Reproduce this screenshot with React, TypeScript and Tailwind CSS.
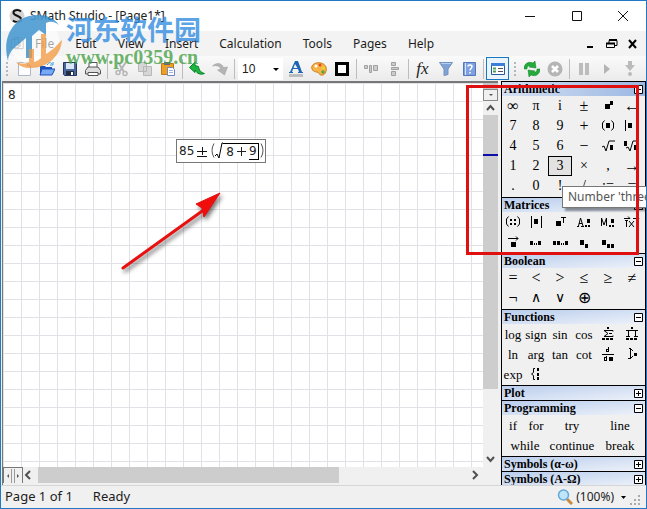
import React from "react";

const menus = ["File", "Edit", "View", "Insert", "Calculation", "Tools", "Pages", "Help"];

type IconProps = { children: React.ReactNode; size?: number };

const Icon = ({ children, size = 16 }: IconProps) => (
  <svg width={size} height={size} viewBox="0 0 16 16" fill="none" aria-hidden="true">
    {children}
  </svg>
);

// small drawings used inside the palette cells, on a 24x20 field
const Glyph = ({ blocks = [], path = "" }: { blocks?: number[][]; path?: string }) => (
  <svg width="24" height="20" viewBox="0 0 24 20" className="shrink-0" aria-hidden="true">
    {blocks.map((b, i) => (
      <rect key={i} x={b[0]} y={b[1]} width={b[2]} height={b[3]} fill="#000" />
    ))}
    <path d={path} stroke="#000" fill="none" />
  </svg>
);

const parens = "M8.500 4.500l-2 2.500v5l2 2.500M15.500 4.500l2 2.500v5l-2 2.500";

type Cell = { label: string; text?: string; icon?: React.ReactNode; wide?: boolean; size?: string; active?: boolean };

const t = (text: string): Cell => ({ label: text, text });
const num = (text: string): Cell => ({ label: text, text, size: "text-[14px]" });
const op = (text: string): Cell => ({ label: text, text, size: "text-[16px]" });
const wide = (text: string): Cell => ({ label: text, text, wide: true });
const g = (label: string, blocks: number[][], path = ""): Cell => ({
  label,
  icon: <Glyph blocks={blocks} path={path} />,
});

const sections: { title: string; cells: Cell[]; strong?: boolean }[] = [
  {
    title: "Arithmetic",
    strong: true,
    cells: [
      op("∞"), num("π"), num("i"), op("±"),
      g("power", [[9, 8, 5, 5], [14, 5, 3, 4]]),
      op("←"),
      num("7"), num("8"), num("9"), op("+"),
      g("brackets", [[10, 7, 4, 5]], parens),
      g("absolute value", [[8, 7, 4, 5]], "M5.500 4v11M16.500 4v11"),
      num("4"), num("5"), num("6"), op("−"),
      g("square root", [[14, 9, 3, 5]], "M6 11l2-1 2 5 3-10h6"),
      g("nth root", [[4, 5, 3, 5], [14, 9, 3, 5]], "M6 12l2-1 2 4 3-10h6"),
      num("1"), num("2"), { ...num("3"), active: true }, num("×"), num(","), op("→"),
      num("."), num("0"), num("!"), num("/"), num(":="), op("="),
    ],
  },
  {
    title: "Matrices",
    cells: [
      g("matrix", [[9, 7, 2, 2], [13, 7, 2, 2], [9, 11, 2, 2], [13, 11, 2, 2]], "M7.500 4.500l-2 2.500v5l2 2.500M16.500 4.500l2 2.500v5l-2 2.500"),
      g("determinant", [[10, 7, 4, 5]], "M7.500 4v12M17.500 4v12"),
      g("transpose", [[8, 9, 5, 5]], "M13 5.500h5M15.500 5v6"),
      g("algebraic", [[13, 13, 2, 2], [16, 13, 2, 2], [15, 7, 3, 4]], "M5 14.500h2M9 14.500h3M6.500 14l2-8 2.500 8M7 11.500h3"),
      g("minor", [[13, 13, 2, 2], [16, 13, 2, 2], [15, 7, 3, 4]], "M5.500 14V6l2.500 7 2.500-7v8"),
      g("cross product", [], "M4 6.500h6M8 4.500l2 2M5 8.500h3M6.500 8v7M9 9l5 6M14 9l-5 6M13 6.500h6M17 4.500l2 2M17.500 9v6"),
      g("vector", [[10, 10, 5, 5]], "M7 6.500h10M15 4.500l2 2-2 2"),
      g("range", [[6, 9, 3, 4], [10, 11, 1, 2], [12, 11, 1, 2], [14, 9, 3, 4]]),
      g("range with step", [[5, 9, 3, 4], [9, 9, 3, 4], [13, 11, 1, 2], [15, 11, 1, 2], [17, 9, 3, 4]]),
      g("element", [[8, 8, 4, 5], [13, 12, 3, 4]]),
      g("element of matrix", [[6, 8, 4, 5], [11, 12, 3, 4], [15, 12, 3, 4]]),
    ],
  },
  {
    title: "Boolean",
    cells: [op("="), op("<"), op(">"), op("≤"), op("≥"), op("≠"), op("¬"), num("∧"), num("∨"), op("⊕")],
  },
  {
    title: "Functions",
    cells: [
      t("log"), t("sign"), t("sin"), t("cos"),
      g("sum", [[11, 3, 2, 2], [6, 14, 3, 2], [10, 14, 3, 2], [14, 14, 3, 2]], "M17 7.500v-1H8l4 3-4 3h9v-1M13 9.500h3"),
      g("product", [[11, 3, 2, 2], [6, 14, 3, 2], [10, 14, 3, 2], [14, 14, 3, 2]], "M6 6.500h12M8.500 6v7M15.500 6v7M6 12.500h4M14 12.500h4"),
      t("ln"), t("arg"), t("tan"), t("cot"),
      g("derivative", [[13, 13, 4, 4]], "M6 10.500h12M12.500 3v5M10 7.500h3M10 5.500h3M10.500 5v3M10.500 12v5M8 16.500h3M8 13.500h3M8.500 13v4"),
      g("integral", [[14, 9, 3, 3]], "M9 4.500h2M10.500 4v11M8 14.500h3M11 5l2 2M11 14l2-2"),
      t("exp"),
      g("system", [[13, 4, 2, 3], [13, 9, 2, 3], [13, 13, 2, 3]], "M11 4.500H9.500v4l-2 1.500 2 1.500v4H11"),
    ],
  },
  { title: "Plot", cells: [] },
  {
    title: "Programming",
    cells: [t("if"), t("for"), wide("try"), wide("line"), wide("while"), wide("continue"), wide("break")],
  },
  { title: "Symbols (α-ω)", cells: [] },
  { title: "Symbols (Α-Ω)", cells: [] },
];

const Tool = ({ label, children }: { label: string; children: React.ReactNode }) => (
  <button aria-label={label} className="flex h-6 w-[23px] shrink-0 items-center justify-center">
    {children}
  </button>
);

const Sep = () => (
  <div className="flex h-5 w-[6px] shrink-0 justify-center">
    <div className="w-px bg-[#bdbdbd]" />
  </div>
);

const Grip = () => (
  <div className="flex w-[11px] shrink-0 flex-col items-center gap-[2px]">
    {[0, 1, 2, 3].map((i) => (
      <span key={i} className="size-[2px] bg-[#b4b8be]" />
    ))}
  </div>
);

const TitleBar = () => (
  <div className="flex h-[30px] shrink-0 items-center bg-white">
    <svg width="16" height="16" viewBox="0 0 16 16" className="ml-2" aria-hidden="true">
      <circle cx="8" cy="8" r="7.500" fill="#d3d3d3" />
      <path d="M12 3.500C9 1 4 2 4.500 5c.5 3 7.500 2.500 7.500 6 0 3-5 4-8 1.500" stroke="#111" strokeWidth="2" fill="none" />
    </svg>
    <h1 className="ml-[5px] flex-1 text-[12px] text-[#222]">SMath Studio - [Page1*]</h1>
    {["M2 8.500h10", "M3.500 3.500h9v9h-9z", "M3 3l10 10M13 3L3 13"].map((d, i) => (
      <button key={d} aria-label={["Minimize", "Maximize", "Close"][i]} className="flex w-[46px] justify-center">
        <Icon>
          <path d={d} stroke="#111" />
        </Icon>
      </button>
    ))}
  </div>
);

const MenuBar = () => (
  <div className="flex h-[25px] shrink-0 items-center bg-[#f3f3f3] pr-[3px]">
    <span className="ml-[9px] mr-[10px]">
      <Icon size={15}>
        <path d="M1.500 3.500h8v9h-8zM5 1.500h6l3 3v9H5z" fill="#fff" stroke="#777" />
        <path d="M7 6.500h5M7 8.500h5M7 10.500h5" stroke="#777" />
      </Icon>
    </span>
    <nav className="flex flex-1 gap-[21px]">
      {menus.map((m) => (
        <button key={m}>{m}</button>
      ))}
    </nav>
    <button aria-label="Minimize page" className="w-[21px]">
      <Icon>
        <path d="M4 11h6" stroke="#000" strokeWidth="2" />
      </Icon>
    </button>
    <button aria-label="Restore page" className="w-[21px]">
      <Icon>
        <path d="M5 7V4.500h8v5h-2M2.500 7.500h8v4h-8z" stroke="#000" />
        <path d="M5 4h8M2 7.500h9" stroke="#000" strokeWidth="2" />
      </Icon>
    </button>
    <button aria-label="Close page" className="w-[18px]">
      <Icon>
        <path d="M4 4l7 8M11 4l-7 8" stroke="#000" strokeWidth="2" />
      </Icon>
    </button>
  </div>
);

const ToolBar = () => (
  <div className="flex h-[25px] shrink-0 items-center bg-gradient-to-b from-[#fafafa] to-[#ebebeb]">
    <Grip />
    <Tool label="New">
      <Icon>
        <path d="M2.500 1.500h9l3 3v10h-12z" fill="#fdfdff" stroke="#aeb6c8" />
        <path d="M11.500 1.500v3h3" stroke="#aeb6c8" />
      </Icon>
    </Tool>
    <Tool label="Open">
      <Icon>
        <path d="M1 5h5l1 1h6v8H1z" fill="#1b52b8" />
        <path d="M3 8h13l-3 6H1z" fill="#77aaf2" stroke="#1d4fc0" />
        <path d="M8 4c2-3 4-3 5-1M14 1v3h-3" stroke="#3c9de0" />
      </Icon>
    </Tool>
    <Tool label="Save">
      <Icon>
        <path d="M1.500 1.500h13v13h-12l-1-1z" fill="#4b6698" stroke="#22365f" />
        <path d="M4 2h8v6H4z" fill="#d9e6f7" />
        <path d="M4 10h8v4H4z" fill="#222c42" />
        <path d="M9 11h2v3H9z" fill="#fff" />
      </Icon>
    </Tool>
    <Tool label="Print">
      <Icon>
        <path d="M4 6V1.500h8V6" fill="#fff" stroke="#555" />
        <path d="M.5 9.500L3 6h10l2.500 3.500V13H.5z" fill="#ddd" stroke="#555" />
        <path d="M3 11.500h10v3H3z" fill="#fff" stroke="#555" />
      </Icon>
    </Tool>
    <Sep />
    <Tool label="Cut">
      <Icon>
        <path d="M4 1l6 10M12 1L6 10" stroke="#b5b5b5" strokeWidth="2" />
        <circle cx="4" cy="11.500" r="2" stroke="#b5b5b5" strokeWidth="1.500" />
        <circle cx="11" cy="12.500" r="2" stroke="#b5b5b5" strokeWidth="1.500" />
      </Icon>
    </Tool>
    <Tool label="Copy">
      <Icon>
        <path d="M1.500 1.500h8v9h-8zM6.500 5.500h8v9h-8z" fill="#d6d6d6" stroke="#b8b8b8" />
      </Icon>
    </Tool>
    <Tool label="Paste">
      <Icon>
        <path d="M1.500 2.500h12v11h-12z" fill="#efa021" stroke="#bc781a" />
        <path d="M4 1h6v3H4z" fill="#667" />
        <path d="M7.500 6.500h5l2 2v6h-7z" fill="#fff" stroke="#7089c2" />
        <path d="M9 9.500h4M9 11.500h4" stroke="#a0b4dd" />
      </Icon>
    </Tool>
    <Sep />
    <Tool label="Undo">
      <Icon>
        <path d="M6 1L.5 6.500 6 11.500V9c2 4 6 5 9.500 3.500C11.500 11.500 10 9 9.500 5.500L6 4.500z" fill="#1fb440" stroke="#078326" />
      </Icon>
    </Tool>
    <Tool label="Redo">
      <Icon>
        <path d="M.5 5C5 1 9.500 2 11.500 6.500l4-.5-3 8-7-5 3.500-1C7.500 5 5 4 .5 5z" fill="#b4b4b4" stroke="#999" strokeWidth=".5" />
      </Icon>
    </Tool>
    <Sep />
    <div className="relative mx-px w-[45px] shrink-0">
      <select aria-label="Font size" defaultValue="10" className="block h-[22px] w-full appearance-none bg-white pl-1 font-['Liberation_Sans',sans-serif] text-[12px]">
        <option>10</option>
        <option>12</option>
      </select>
      <svg width="6" height="3" viewBox="0 0 6 3" className="pointer-events-none absolute right-1 top-[10px]" aria-hidden="true">
        <path d="M0 0h6L3 3z" />
      </svg>
    </div>
    <Tool label="Text color">
      <Icon>
        <path d="M1 13h14v3H1z" fill="#bdbdbd" />
        <path d="M7 0h3l4 11h1v1h-5v-1h1l-1-3H5l-1 3h1v1H1v-1h1zM7 3L5.500 7h4z" fill="#1e64b4" fillRule="evenodd" />
      </Icon>
    </Tool>
    <Tool label="Background color">
      <Icon>
        <path d="M1 5c3-5 12-4 14 1 1 4-1 9-5 8-2 0-2-3-4-3-4 0-6-3-5-6z" fill="#f7b446" stroke="#cf7a1d" />
        <circle cx="5" cy="5" r="1.500" fill="#fff" />
        <circle cx="9" cy="4" r="1.500" fill="#e14a25" />
        <circle cx="12.500" cy="7" r="1.500" fill="#e3d52d" />
        <circle cx="12" cy="11" r="1.700" fill="#56a53a" />
      </Icon>
    </Tool>
    <Tool label="Border">
      <Icon>
        <path d="M2.500 2.500h11v11h-11z" fill="#fff" stroke="#000" strokeWidth="3" />
      </Icon>
    </Tool>
    <Sep />
    <Tool label="Align horizontally">
      <Icon>
        <path d="M1.500 4.500h3v3h-3zM6.500 4.500h2v7h-2zM10.500 4.500h4v5h-4z" fill="#ccc" stroke="#a0a0a0" />
      </Icon>
    </Tool>
    <Tool label="Align vertically">
      <Icon>
        <path d="M5.500 1.500h4v3h-4zM5.500 6.500h7v2h-7zM5.500 10.500h4v4h-4z" fill="#ccc" stroke="#a0a0a0" />
      </Icon>
    </Tool>
    <Sep />
    <Tool label="Function">
      <span className="font-['Liberation_Serif',serif] text-[17px] leading-none italic text-[#222]">fx</span>
    </Tool>
    <Tool label="Filter">
      <Icon>
        <path d="M1.500 1.500h13L10 8v5.500l-4 1V8z" fill="#80a3d6" stroke="#7091c2" />
        <path d="M3 2.500h10" stroke="#b9cdec" />
      </Icon>
    </Tool>
    <Tool label="Help book">
      <Icon>
        <path d="M2.500 1.500h12v13h-12z" fill="#7ea0e0" stroke="#5578bd" />
        <path d="M4.500 2v12" stroke="#dbe5f9" />
        <path d="M7 5.500c0-2 4-2 4 0S9 7.500 9 9.500M9 11v1.500" stroke="#fff" strokeWidth="1.500" />
      </Icon>
    </Tool>
    <Sep />
    <button aria-label="Side panel" className="flex size-[23px] shrink-0 items-center justify-center border border-[#1878bf] bg-[#e9f4fd]">
      <Icon>
        <path d="M1.500 2.500h13v11h-13z" fill="#fff" stroke="#285aa0" />
        <path d="M1 3.500h14" stroke="#3d7fd6" strokeWidth="3" />
        <path d="M8 7.500h5M8 10.500h5" stroke="#555" />
        <path d="M3 6.500h3v2H3zM3 9.500h3v2H3z" fill="#4d9f53" />
      </Icon>
    </button>
    <Grip />
    <Tool label="Recalculate">
      <Icon>
        <path d="M0 8C0 3 4 0 9 2l2-2 1 7-7-1 2-1C4 4 3 6 3 8z" fill="#22ac3a" stroke="#0c7e21" strokeWidth=".5" />
        <path d="M16 8c0 5-4 8-9 6l-2 2-1-7 7 1-2 1c3 1 4-1 4-3z" fill="#22ac3a" stroke="#0c7e21" strokeWidth=".5" />
      </Icon>
    </Tool>
    <Tool label="Stop">
      <Icon>
        <circle cx="8" cy="8" r="7.500" fill="#b5b5b5" />
        <path d="M5 5l6 6M11 5l-6 6" stroke="#fff" strokeWidth="2.500" />
      </Icon>
    </Tool>
    <Sep />
    <Tool label="Pause">
      <Icon>
        <path d="M3 2h4v12H3zM9 2h4v12H9z" fill="#bcbcbc" />
      </Icon>
    </Tool>
    <Tool label="Run">
      <Icon>
        <path d="M5 3l6 5-6 5z" fill="#b4b4b4" />
      </Icon>
    </Tool>
    <Tool label="Step">
      <Icon>
        <path d="M6 0h4v4h3l-5 6-5-6h3z" fill="#bbb" />
        <circle cx="8" cy="13" r="2" fill="#bbb" />
      </Icon>
    </Tool>
  </div>
);

const Formula = () => (
  <div className="absolute left-[173px] top-[56px] flex h-6 items-center border border-[#777] bg-white pl-[2px] font-['DejaVu_Sans',sans-serif] text-[12px] leading-none text-[#222]">
    <span>85</span>
    <svg width="12" height="14" viewBox="0 0 12 14" className="ml-[2px]" aria-hidden="true">
      <path d="M1 7.500h10M6.500 3v8M1 12.500h10" stroke="#111" />
    </svg>
    <svg width="13" height="20" viewBox="0 0 13 20" className="ml-[2px]" aria-hidden="true">
      <path d="M4 2.500q-4 7 0 14" stroke="#555" fill="none" />
      <path d="M5 15l2-2 2 4 3-15h1" stroke="#000" fill="none" />
    </svg>
    <span className="flex h-[17px] items-center gap-[3px] border-t border-black pl-[3px]">
      <span>8</span>
      <svg width="9" height="9" viewBox="0 0 9 9" aria-hidden="true">
        <path d="M0 4.500h9M4.500 0v9" stroke="#222" />
      </svg>
      <span className="flex h-4 items-center border-r border-b border-black pr-px">9</span>
    </span>
    <svg width="6" height="20" viewBox="0 0 6 20" aria-hidden="true">
      <path d="M2 2.500q4 7 0 14" stroke="#555" fill="none" />
    </svg>
  </div>
);

const Worksheet = () => (
  <main className="relative min-w-0 flex-1 overflow-hidden bg-white bg-[linear-gradient(to_right,#e0e2e5_1px,transparent_1px),linear-gradient(to_bottom,#e0e2e5_1px,transparent_1px)] bg-[size:18px_18px]">
    <p className="pl-[5px] pt-[6px] font-['DejaVu_Sans',sans-serif] text-[12px] leading-3 text-[#222]">8</p>
    <Formula />
    <svg width="110" height="90" viewBox="0 0 110 90" className="absolute left-[114px] top-[104px] drop-shadow-[2px_3px_2px_#0008]" aria-hidden="true">
      <path d="M6 81L88 22" stroke="#e81111" strokeWidth="3" strokeLinecap="round" />
      <path d="M103 6L79 17l6 4 2 9z" fill="#f20d0d" stroke="#e01010" />
    </svg>
  </main>
);

const Chevron = ({ d }: { d: string }) => (
  <svg width="15" height="14" viewBox="0 0 15 14" className="shrink-0" aria-hidden="true">
    <path d={d} stroke="#505050" strokeWidth="2" fill="none" />
  </svg>
);

const VerticalScroll = () => (
  <div className="flex w-[15px] shrink-0 flex-col bg-[#f0f0f0]">
    <div className="flex h-[18px] shrink-0 flex-col justify-end bg-[#c6c6c6]">
      <div className="flex h-3 items-center justify-center border border-[#888] bg-[#f0f0f0]">
        <svg width="4" height="2" viewBox="0 0 4 2" aria-hidden="true">
          <path d="M0 0h4L2 2z" fill="#555" />
        </svg>
      </div>
    </div>
    <Chevron d="M4 9l3.500-4L11 9" />
    <div className="flex-1">
      <div className="h-[81%] bg-[#cdcdcd] pt-[39px]">
        <div className="h-[2px] bg-[#0d0da8]" />
      </div>
    </div>
    <Chevron d="M4 4l3.500 4L11 4" />
  </div>
);

const HorizontalScroll = () => (
  <div className="flex h-[18px] shrink-0 items-start bg-[#f0f0f0] pr-[15px]">
    <div className="flex h-4 w-5 items-center justify-center border border-b-0 border-[#777]">
      <svg width="14" height="14" viewBox="0 0 14 14" aria-hidden="true">
        <path d="M5.500 0v14M8.500 0v14" stroke="#999" />
        <path d="M3 5L1 7l2 2zM11 5l2 2-2 2z" fill="#555" />
      </svg>
    </div>
    <Chevron d="M7 4L3 8l4 4" />
    <div className="h-4 flex-1">
      <div className="h-4 w-[70%] bg-[#cdcdcd]" />
    </div>
    <Chevron d="M5 4l4 4-4 4" />
  </div>
);

const Palette = () => (
  <aside className="ml-[3px] w-[145px] shrink-0 overflow-hidden border-x border-black bg-[#f0f0f0] font-['Liberation_Serif',serif] text-black">
    {sections.map((s) => (
      <section key={s.title} className="border-t border-black">
        <h2
          className={
            "flex h-[14px] items-center justify-between pl-[2px] pr-[2px] text-[12px] leading-none font-bold " +
            (s.strong ? "bg-gradient-to-r from-[#d5e0f2] to-[#9cb8e2]" : "bg-gradient-to-br from-[#b9cdec] to-[#eef2fa]")
          }
        >
          {s.title}
          <button aria-label={"Toggle " + s.title}>
            <svg width="9" height="9" viewBox="0 0 9 9" aria-hidden="true">
              <path d={s.cells.length ? "M.5.5h8v8h-8zM2 4.500h5" : "M.5.5h8v8h-8zM2 4.500h5M4.500 2v5"} fill="#fff" stroke="#000" />
            </svg>
          </button>
        </h2>
        {s.cells.length > 0 && (
          <div className="grid grid-cols-[22px_repeat(5,24px)] pb-px">
            {s.cells.map((c, i) => (
              <button
                key={i}
                aria-label={c.label}
                className={
                  "flex h-5 items-center justify-center leading-none whitespace-nowrap " +
                  (c.wide ? "col-span-2 " : "") +
                  (c.size || "text-[13px]") +
                  (c.active ? " border border-black bg-[#e2e2e2]" : "")
                }
              >
                {c.icon || c.text}
              </button>
            ))}
          </div>
        )}
      </section>
    ))}
  </aside>
);

const StatusBar = () => (
  <footer className="flex h-[23px] shrink-0 items-center border-t border-[#d5d5d5] bg-[#f0f0f0] text-[13px]">
    <span className="ml-1">Page 1 of 1</span>
    <span className="ml-5 flex-1">Ready</span>
    <button className="flex items-center gap-[3px] text-[12px]">
      <Icon>
        <path d="M10 10l5 5" stroke="#c98a3c" strokeWidth="3" />
        <circle cx="6.500" cy="6" r="5" fill="#bfe5fa" stroke="#63a9d4" strokeWidth="1.500" />
      </Icon>
      (100%)
      <svg width="5" height="3" viewBox="0 0 5 3" className="ml-1" aria-hidden="true">
        <path d="M0 0h5L2.500 3z" />
      </svg>
    </button>
    <svg width="12" height="12" viewBox="0 0 12 12" className="mx-1 mt-2" aria-hidden="true">
      <path d="M8 0h2v2H8zM8 4h2v2H8zM8 8h2v2H8zM4 4h2v2H4zM4 8h2v2H4zM0 8h2v2H0z" fill="#aaa" />
    </svg>
  </footer>
);

const Watermark = () => (
  <div className="pointer-events-none absolute left-[4px] top-[10px] flex">
    <svg width="60" height="60" viewBox="0 0 60 60" aria-hidden="true">
      <circle cx="29" cy="29" r="25" fill="#fff" opacity=".6" />
      <path d="M3 50C-4 25 10 4 32 4c10 0 17 3 22 10-5-4-9-4-13-2v12l-7-5-7 6v22h-6V27L9 37c-4 4-6 8-6 13z" fill="#2686c8" opacity=".75" />
      <path d="M57 29c-1 15-14 28-31 28-7 0-12-2-15-6 5 2 9 2 13 0V38h5v13c3-1 5-2 7-4V23h5v20c7-4 11-9 16-14z" fill="#f2953b" opacity=".75" />
    </svg>
    <div className="ml-px pt-px whitespace-nowrap">
      <div className="font-['Noto_Sans_CJK_SC',sans-serif] text-[27px] leading-[34px] font-bold text-[#2f8be0]/80">河东软件园</div>
      <div className="font-['Liberation_Serif',serif] text-[20px] leading-[22px] font-bold text-[#45a045]/80">www.pc0359.cn</div>
    </div>
  </div>
);

export default function App() {
  return (
    <div className="relative flex h-screen flex-col overflow-hidden border border-[#2278c4] bg-[#f0f0f0] font-['Noto_Sans',sans-serif] text-[12px] text-[#1c1c1c]">
      <TitleBar />
      <MenuBar />
      <ToolBar />
      <div className="flex min-h-0 flex-1">
        <div className="ml-px flex min-w-0 flex-1 flex-col border-t-2 border-l border-[#777]">
          <div className="flex min-h-0 flex-1">
            <Worksheet />
            <VerticalScroll />
          </div>
          <HorizontalScroll />
        </div>
        <Palette />
      </div>
      <StatusBar />
      <div role="tooltip" className="absolute top-[185px] -right-px h-[22px] w-[85px] overflow-hidden border border-[#777] bg-white pl-[5px] text-[12px] leading-5 whitespace-nowrap text-[#555] shadow-[3px_3px_2px_#0006]">
        Number 'three'
      </div>
      <div className="pointer-events-none absolute top-[84px] right-[7px] h-[170px] w-[173px] border-3 border-[#e01010]" />
      <Watermark />
    </div>
  );
}
